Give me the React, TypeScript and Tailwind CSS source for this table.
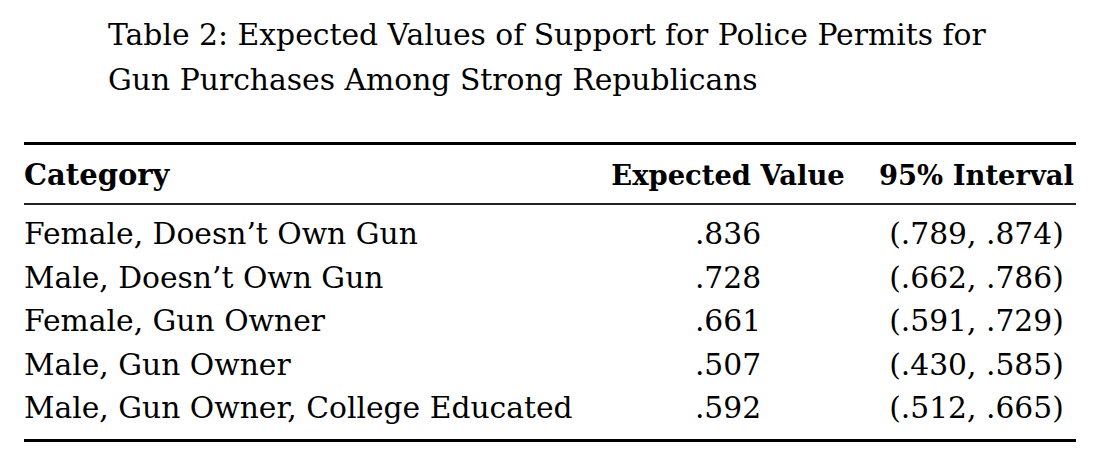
import React from "react";

const rows: [string, string, string][] = [
  ["Female, Doesn’t Own Gun", ".836", "(.789, .874)"],
  ["Male, Doesn’t Own Gun", ".728", "(.662, .786)"],
  ["Female, Gun Owner", ".661", "(.591, .729)"],
  ["Male, Gun Owner", ".507", "(.430, .585)"],
  ["Male, Gun Owner, College Educated", ".592", "(.512, .665)"],
];

export default function App() {
  return (
    <div className="w-[1098px] h-[458px] bg-white text-black font-['DejaVu_Serif',serif] overflow-hidden">
      <div className="pl-[108px] pt-[12px] text-[29.8px] leading-[45px] whitespace-nowrap">
        <div>Table 2: Expected Values of Support for Police Permits for</div>
        <div>Gun Purchases Among Strong Republicans</div>
      </div>
      <div className="ml-[24px] mt-[40px] w-[1052px]">
        <div className="h-[3px] bg-black" />
        <div className="grid grid-cols-[551px_232px_191px] gap-x-[37px] pt-[8px] pb-[6px] leading-[44px] font-bold whitespace-nowrap">
          <div className="text-[29px]">Category</div>
          <div className="flex justify-center text-[27.4px]">Expected Value</div>
          <div className="flex justify-center text-[27.4px]">95% Interval</div>
        </div>
        <div className="h-[2px] bg-[#222]" />
        <div className="pt-[7px] pb-[9px] text-[29.75px] leading-[43.5px] whitespace-nowrap">
          {rows.map((r) => (
            <div key={r[0]} className="grid grid-cols-[551px_232px_191px] gap-x-[37px]">
              <div>{r[0]}</div>
              <div className="flex justify-center">{r[1]}</div>
              <div className="flex justify-center">{r[2]}</div>
            </div>
          ))}
        </div>
        <div className="h-[3px] bg-black" />
      </div>
    </div>
  );
}
